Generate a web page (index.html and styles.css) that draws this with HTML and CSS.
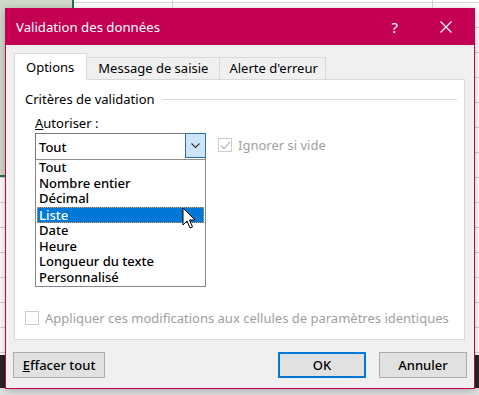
FILE: index.html
```html
<!DOCTYPE html>
<html lang="fr">
<head>
  <meta charset="UTF-8" />
  <meta name="viewport" content="width=device-width, initial-scale=1" />
  <title>Validation des données</title>
  <link rel="stylesheet" href="styles.css">
</head>
<body>
  <div class="sheet">
    <div class="dialog">
      <div class="titlebar">
        <span class="title">Validation des données</span>
        <span class="help">?</span>
        <svg class="close" width="12" height="12" viewBox="0 0 12 12">
          <path d="M0.5 0.5 L11.5 11.5 M11.5 0.5 L0.5 11.5" stroke="#fff" stroke-width="1.2" fill="none" />
        </svg>
      </div>

      <div class="dialog-body">
        <div class="tabs">
          <div class="tab active">Options</div>
          <div class="tab">Message de saisie</div>
          <div class="tab">Alerte d'erreur</div>
        </div>

        <div class="panel">
          <div class="group-title">
            <span>Critères de validation</span>
            <div class="group-line"></div>
          </div>

          <div class="allow-row">
            <div class="allow-col">
              <div class="label"><u>A</u>utoriser :</div>
              <div class="combo">
                <span class="combo-value">Tout</span>
                <div class="combo-btn">
                  <svg width="9" height="6" viewBox="0 0 9 6">
                    <path d="M0.5 0.5 L4.5 4.5 L8.5 0.5" stroke="#333" stroke-width="1.1" fill="none" />
                  </svg>
                </div>
              </div>
              <div class="listbox">
                <div class="item">Tout</div>
                <div class="item">Nombre entier</div>
                <div class="item">Décimal</div>
                <div class="item selected">Liste</div>
                <div class="item">Date</div>
                <div class="item">Heure</div>
                <div class="item">Longueur du texte</div>
                <div class="item">Personnalisé</div>
                <svg class="cursor" width="14" height="23" viewBox="0 0 14 23">
                  <path d="M1 1 L1 18 L5 14 L8 21 L10.5 20 L7.5 13 L13 13 Z" fill="#fff" stroke="#000" stroke-width="1" stroke-linejoin="miter" />
                </svg>
              </div>
            </div>

            <div class="check disabled ignore">
              <div class="box">
                <svg width="11" height="9" viewBox="0 0 11 9">
                  <path d="M0.8 4.5 L4 7.6 L10.2 0.8" stroke="#b4b4b4" stroke-width="1.2" fill="none" />
                </svg>
              </div>
              <span>Ignorer si vide</span>
            </div>
          </div>

          <div class="check disabled apply">
            <div class="box"></div>
            <span>Appliquer ces modifications aux cellules de paramètres identiques</span>
          </div>
        </div>

        <div class="footer">
          <button class="btn wide"><u>E</u>ffacer tout</button>
          <div class="footer-space"></div>
          <button class="btn default">OK</button>
          <button class="btn">Annuler</button>
        </div>
      </div>
    </div>
  </div>
</body>
</html>
```

FILE: styles.css
```css
* {
  box-sizing: border-box;
  margin: 0;
  padding: 0;
}

body {
  font-family: "Segoe UI", "Noto Sans", "Open Sans", sans-serif;
  font-size: 13px;
  color: #000;
  width: 479px;
  height: 395px;
  overflow: hidden;
}

/* Excel sheet behind the dialog */
.sheet {
  width: 479px;
  height: 395px;
  padding: 8px 0 0 5px;
  background:
    linear-gradient(#e2e2e2, #e2e2e2) 0 388px / 100% 7px no-repeat,
    linear-gradient(#262626, #262626) 0 355px / 100% 33px no-repeat,
    linear-gradient(#217346, #217346) 72px 0 / 2px 176px no-repeat,
    linear-gradient(#217346, #217346) 0 175px / 74px 2px no-repeat,
    linear-gradient(#cfdacb, #cfdacb) 0 0 / 72px 175px no-repeat,
    linear-gradient(90deg, transparent 172px, #d4d4d4 172px, #d4d4d4 173px, transparent 173px, transparent 432px, #d4d4d4 432px, #d4d4d4 433px, transparent 433px),
    repeating-linear-gradient(transparent 0, transparent 2px, #d4d4d4 2px, #d4d4d4 3px, transparent 3px, transparent 25px),
    #fff;
}

.dialog {
  width: 470px;
  height: 381px;
  border: 1px solid #c30052;
  background: #f0f0f0;
  display: flex;
  flex-direction: column;
  box-shadow: 0 2px 8px rgba(0, 0, 0, 0.25);
}

.titlebar {
  height: 36px;
  background: #c30052;
  color: #fff;
  display: flex;
  align-items: center;
  padding: 0 22px 0 10px;
}

.title {
  font-size: 13.2px;
  flex: 1;
  padding-bottom: 1px;
}

.help {
  font-size: 15px;
  margin-right: 42px;
}

.close {
  display: block;
}

.dialog-body {
  flex: 1;
  display: flex;
  flex-direction: column;
  padding: 8px 9px 0 8px;
}

.tabs {
  display: flex;
  align-items: flex-end;
  height: 26px;
  position: relative;
  z-index: 1;
}

.tab {
  height: 22px;
  border: 1px solid #d9d9d9;
  border-bottom: none;
  background: #f0f0f0;
  padding: 0 11px 0 11px;
  line-height: 20px;
  margin-left: -1px;
}

.tab:last-child {
  padding: 0 7px 0 9px;
}

.tab.active {
  height: 27px;
  background: #fff;
  margin-left: 0;
  margin-bottom: -1px;
  padding: 0 12px 0 11px;
  line-height: 27px;
  z-index: 2;
}

.panel {
  height: 261px;
  background: #fff;
  border: 1px solid #d9d9d9;
  padding: 10px 7px 0 10px;
  display: flex;
  flex-direction: column;
}

.group-title {
  display: flex;
  align-items: center;
  height: 18px;
}

.group-line {
  flex: 1;
  height: 1px;
  background: #dcdcdc;
  margin-left: 7px;
}

.allow-row {
  display: flex;
  padding-left: 10px;
  margin-top: 6px;
}

.allow-col {
  width: 171px;
}

.label {
  height: 18px;
  line-height: 18px;
  margin-bottom: 1px;
}

.combo {
  height: 26px;
  border: 1px solid #7a7a7a;
  border-bottom: none;
  display: flex;
  align-items: center;
  font-weight: 500;
}

.combo-value {
  flex: 1;
  padding-left: 3px;
}

.combo-btn {
  width: 21px;
  height: 25px;
  margin-right: -1px;
  align-self: flex-start;
  margin-top: -1px;
  border: 1px solid #2f6ea5;
  background: #cce4f7;
  display: flex;
  align-items: center;
  justify-content: center;
}

.listbox {
  border: 1px solid #828790;
  border-top: 1px solid #8f8f8f;
  padding: 0 1px;
  height: 128px;
  position: relative;
  font-weight: 500;
}

.item {
  height: 15.7px;
  line-height: 15.7px;
  padding-left: 2px;
  white-space: nowrap;
}

.item.selected {
  background: #0078d7;
  color: #fff;
  outline: 1px dotted #e89a4a;
  outline-offset: -1px;
  height: 16px;
  line-height: 16px;
}

.cursor {
  position: absolute;
  left: 146px;
  top: 47px;
}

.check {
  display: flex;
  align-items: center;
  gap: 6px;
}

.check .box {
  width: 14px;
  height: 14px;
  border: 1px solid #cccccc;
  background: #fff;
  display: flex;
  align-items: center;
  justify-content: center;
}

.check.disabled {
  color: #a0a0a0;
}

.ignore {
  margin: 22px 0 0 12px;
  align-self: flex-start;
}

.apply {
  margin-top: auto;
  margin-bottom: 12px;
}

.footer {
  display: flex;
  align-items: center;
  padding: 12px 0 0 0;
  margin-left: -1px;
  margin-right: -2px;
}

.footer-space {
  flex: 1;
}

.btn {
  font-family: inherit;
  font-size: 13px;
  font-weight: 500;
  width: 88px;
  height: 26px;
  border: 1px solid #adadad;
  background: #e1e1e1;
  color: #000;
}

.btn.wide {
  width: 92px;
}

.btn.default {
  border: 2px solid #0078d7;
  margin-right: 13px;
}
```
